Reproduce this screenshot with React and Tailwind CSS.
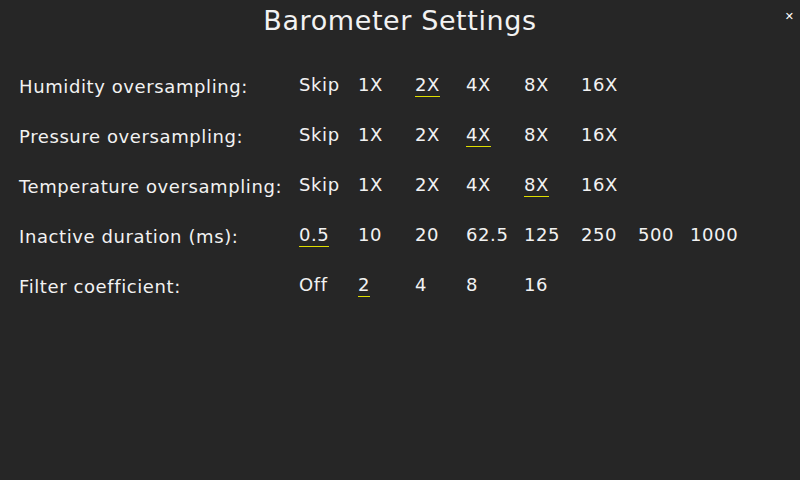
import React from 'react';

const rows = [
  { label: 'Humidity oversampling:', options: ['Skip', '1X', '2X', '4X', '8X', '16X'], selected: 2 },
  { label: 'Pressure oversampling:', options: ['Skip', '1X', '2X', '4X', '8X', '16X'], selected: 3 },
  { label: 'Temperature oversampling:', options: ['Skip', '1X', '2X', '4X', '8X', '16X'], selected: 4 },
  { label: 'Inactive duration (ms):', options: ['0.5', '10', '20', '62.5', '125', '250', '500', '1000'], selected: 0 },
  { label: 'Filter coefficient:', options: ['Off', '2', '4', '8', '16'], selected: 1 },
];

export default function App() {
  return (
    <div
      className="relative w-[800px] h-[480px] bg-[#262626] text-[#f2f2f2] overflow-hidden"
      style={{ fontFamily: '"DejaVu Sans", sans-serif' }}
    >
      <h1 className="text-center text-[27px] leading-none pt-[7px] tracking-[0.6px]">Barometer Settings</h1>
      <button className="absolute top-[11px] right-[6px] text-[11px] leading-none text-white">✕</button>

      <div className="mt-[40px] pl-[19px] flex flex-col gap-[25px]">
        {rows.map((row) => (
          <div key={row.label} className="flex items-center h-[25px] text-[18px] leading-none tracking-[0.6px]">
            <div className="w-[280px]">{row.label}</div>
            <div className="grid grid-cols-[59px_57px_51px_58px_57px_57px_52px_60px]">
              {row.options.map((opt, i) => (
                <div key={opt} className="flex">
                  <span
                    className={
                      i === row.selected
                        ? 'border-b border-[#dede00] pb-[2px]'
                        : 'border-b border-transparent pb-[2px]'
                    }
                  >
                    {opt}
                  </span>
                </div>
              ))}
            </div>
          </div>
        ))}
      </div>
    </div>
  );
}
